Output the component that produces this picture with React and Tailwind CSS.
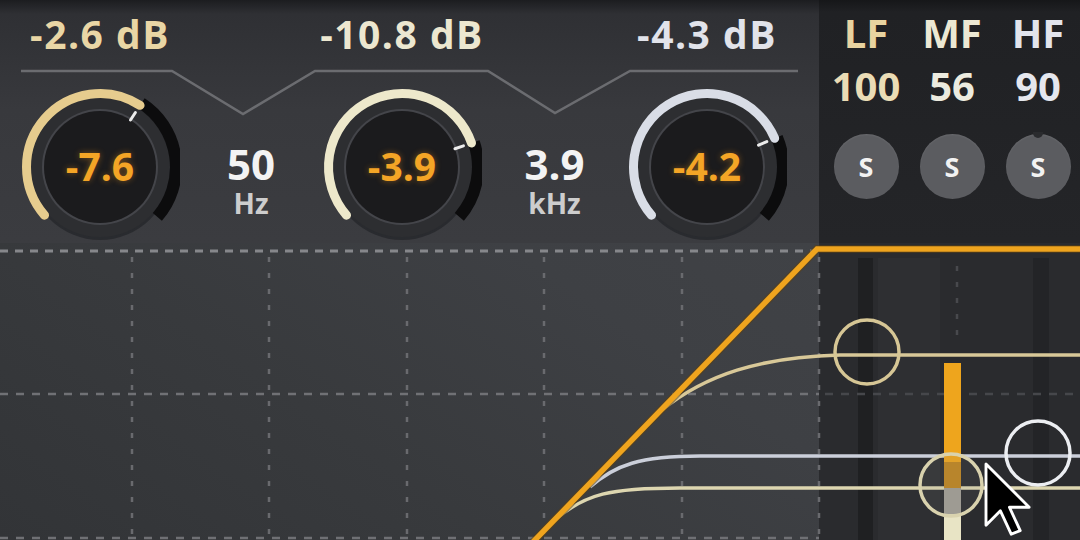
import React from "react";

const pt = (cx, cy, r, deg) => {
  const a = (deg * Math.PI) / 180;
  return [cx + r * Math.sin(a), cy - r * Math.cos(a)];
};
const arc = (cx, cy, r, a0, a1) => {
  const [x0, y0] = pt(cx, cy, r, a0);
  const [x1, y1] = pt(cx, cy, r, a1);
  const large = a1 - a0 > 180 ? 1 : 0;
  return `M${x0} ${y0} A${r} ${r} 0 ${large} 1 ${x1} ${y1}`;
};

function Knob({ value, angle, color }) {
  const [tx0, ty0] = pt(80, 80, 56, angle);
  const [tx1, ty1] = pt(80, 80, 65, angle);
  return (
    <div className="relative w-[160px] h-[160px] flex items-center justify-center shrink-0">
      <svg className="absolute inset-0" width="160" height="160" viewBox="0 0 160 160">
        <circle cx="80" cy="82" r="71" fill="#26272a" opacity="0.8" />
        <circle cx="80" cy="80" r="70" fill="#2d2e31" />
        <path d={arc(80, 80, 76, angle, 131)} stroke="#0c0c0d" strokeWidth="12" fill="none" />
        <path d={arc(80, 80, 73.5, -131, angle)} stroke={color} strokeWidth="9" fill="none" strokeLinecap="round" />
        <circle cx="80" cy="80" r="58" fill="#44454a" />
        <circle cx="80" cy="80" r="56" fill="#1b1b1d" />
        <line x1={tx0} y1={ty0} x2={tx1} y2={ty1} stroke="#ececec" strokeWidth="3" strokeLinecap="round" />
      </svg>
      <span className="relative mb-[4px] text-[39px] leading-none font-bold text-[#f4a526] [text-shadow:0_0_6px_rgba(240,150,30,0.45)]">
        {value}
      </span>
    </div>
  );
}

function Freq({ value, unit, w }) {
  return (
    <div className={`flex flex-col items-center mt-[57px] shrink-0 ${w}`}>
      <span className="text-[42px] leading-[40px] font-bold text-[#f3f3f3]">{value}</span>
      <span className="mt-[5px] text-[28px] leading-[28px] font-bold text-[#cdcdcd]">{unit}</span>
    </div>
  );
}

function Band({ name, value, nameColor, valueColor, notch }) {
  return (
    <div className="flex flex-col items-center w-[86px]">
      <span className={`pt-[13px] text-[40px] leading-none font-bold ${nameColor}`}>{name}</span>
      <span className={`mt-[13px] text-[40px] leading-none font-bold ${valueColor}`}>{value}</span>
      <div className="relative mt-[28px] w-[65px] h-[65px] rounded-full bg-[#5b5c60] flex items-center justify-center shadow-[inset_0_1px_2px_rgba(255,255,255,0.08)]">
        {notch && <span className="absolute -top-[2px] left-[27px] w-[10px] h-[6px] rounded-b-full bg-[#2a2b2e]" />}
        <span className="text-[27px] leading-none font-bold text-[#f2f2f2]">S</span>
      </div>
    </div>
  );
}

export default function App() {
  const vx = [132, 269, 407, 544, 682, 819];
  return (
    <div className="w-[1080px] h-[540px] overflow-hidden flex flex-col font-['Open_Sans',sans-serif] bg-[#2a2b2e]">
      <div className="flex h-[243px] shrink-0">
        <div className="relative w-[819px] shrink-0 bg-[linear-gradient(180deg,#1c1d20_0px,#2f3034_14px,#38393d_110px,#3b3c40_100%)]">
          <svg className="absolute inset-0" width="819" height="243" viewBox="0 0 819 243">
            <polyline
              points="21,71 172,71 243,114 315,71 488,71 555,113 630,71 798,71"
              fill="none"
              stroke="#6b6c70"
              strokeWidth="2.5"
            />
          </svg>
          <div className="relative flex pl-[20px] pt-[14px]">
            <div className="w-[160px] flex justify-center text-[39px] leading-none font-bold tracking-[1.5px] text-[#e9d6a5] whitespace-nowrap">-2.6 dB</div>
            <div className="w-[142px]" />
            <div className="w-[160px] flex justify-center text-[39px] leading-none font-bold tracking-[1.5px] text-[#ece7d0] whitespace-nowrap">-10.8 dB</div>
            <div className="w-[145px]" />
            <div className="w-[160px] flex justify-center text-[39px] leading-none font-bold tracking-[1.5px] text-[#e1e3ea] whitespace-nowrap">-4.3 dB</div>
          </div>
          <div className="relative flex items-start pl-[20px] mt-[34px]">
            <Knob value="-7.6" angle={33} color="#e6cc8e" />
            <Freq value="50" unit="Hz" w="w-[142px]" />
            <Knob value="-3.9" angle={71} color="#ede8cb" />
            <Freq value="3.9" unit="kHz" w="w-[145px]" />
            <Knob value="-4.2" angle={67} color="#d9dde6" />
          </div>
        </div>
        <div className="flex-1 flex pl-[4px] bg-[linear-gradient(180deg,#161719_0px,#202124_12px,#242528_100%)]">
          <Band name="LF" value="100" nameColor="text-[#e8d3a0]" valueColor="text-[#eadcb5]" />
          <Band name="MF" value="56" nameColor="text-[#ece8d3]" valueColor="text-[#ecebdf]" />
          <Band name="HF" value="90" nameColor="text-[#e2e4ec]" valueColor="text-[#e5e7ee]" notch />
        </div>
      </div>

      <div className="relative flex flex-1">
        <div className="w-[819px] shrink-0 bg-[linear-gradient(35deg,#323437_0%,#383a3d_40%,#3e4044_75%,#404246_100%)]" />
        <div className="flex-1 bg-[#2a2b2e]" />
        <svg className="absolute inset-0" width="1080" height="297" viewBox="0 243 1080 297">
          <rect x="858" y="258" width="15" height="282" fill="#1f2022" />
          <rect x="878" y="258" width="62" height="282" fill="#2e2f32" />
          <rect x="1033" y="258" width="16" height="282" fill="#232427" />
          <line x1="0" y1="251" x2="819" y2="251" stroke="#86878b" strokeWidth="3" strokeDasharray="8 7" />
          <line x1="0" y1="394" x2="819" y2="394" stroke="#707175" strokeWidth="2.5" strokeDasharray="8 8" />
          <line x1="825" y1="394" x2="1080" y2="394" stroke="#46474b" strokeWidth="2.5" strokeDasharray="8 8" />
          <line x1="0" y1="538" x2="819" y2="538" stroke="#6f7074" strokeWidth="2.5" strokeDasharray="8 8" />
          {vx.map((x) => (
            <line key={x} x1={x} y1="257" x2={x} y2="540" stroke="#696a6e" strokeWidth="2.5" strokeDasharray="5 11" />
          ))}
          <line x1="957" y1="266" x2="957" y2="340" stroke="#48494d" strokeWidth="2.5" strokeDasharray="5 11" />

          <path d="M662 410 C705 375 760 357 840 355 L1080 355" fill="none" stroke="#d8c898" strokeWidth="3.5" />
          <path d="M590 487 C615 465 640 456 700 456 L1080 456" fill="none" stroke="#cbcfda" strokeWidth="3.5" />
          <path d="M556 519 C585 494 610 488 680 488 L1080 488" fill="none" stroke="#ddd6b0" strokeWidth="3.5" />

          <polyline points="533,542 817,249 1082,249" fill="none" stroke="#5c4212" strokeWidth="8" opacity="0.55" />
          <polyline points="533,542 817,249 1082,249" fill="none" stroke="#efa41e" strokeWidth="5.5" />

          <circle cx="867" cy="352" r="32" fill="none" stroke="#d6c695" strokeWidth="3.5" />

          <rect x="944" y="363" width="17" height="99" fill="#eea51d" />
          <rect x="944" y="462" width="17" height="26" fill="#bf841f" />
          <rect x="944" y="488" width="17" height="26" fill="#a19e95" />
          <rect x="944" y="514" width="17" height="26" fill="#e8e4c5" />
          <circle cx="951" cy="485" r="31" fill="rgba(140,140,140,0.12)" stroke="#d9d2ae" strokeWidth="3.5" />
          <circle cx="1038" cy="453" r="32" fill="none" stroke="#eceef2" strokeWidth="3.5" />

          <path
            d="M0 0 L0 17 L4 13 L7 19.5 L9.5 18.5 L6.5 12 L12 12 Z"
            transform="translate(986 464) scale(3.6)"
            fill="#000"
            stroke="#fff"
            strokeWidth="0.8"
            strokeLinejoin="round"
          />
        </svg>
      </div>
    </div>
  );
}
